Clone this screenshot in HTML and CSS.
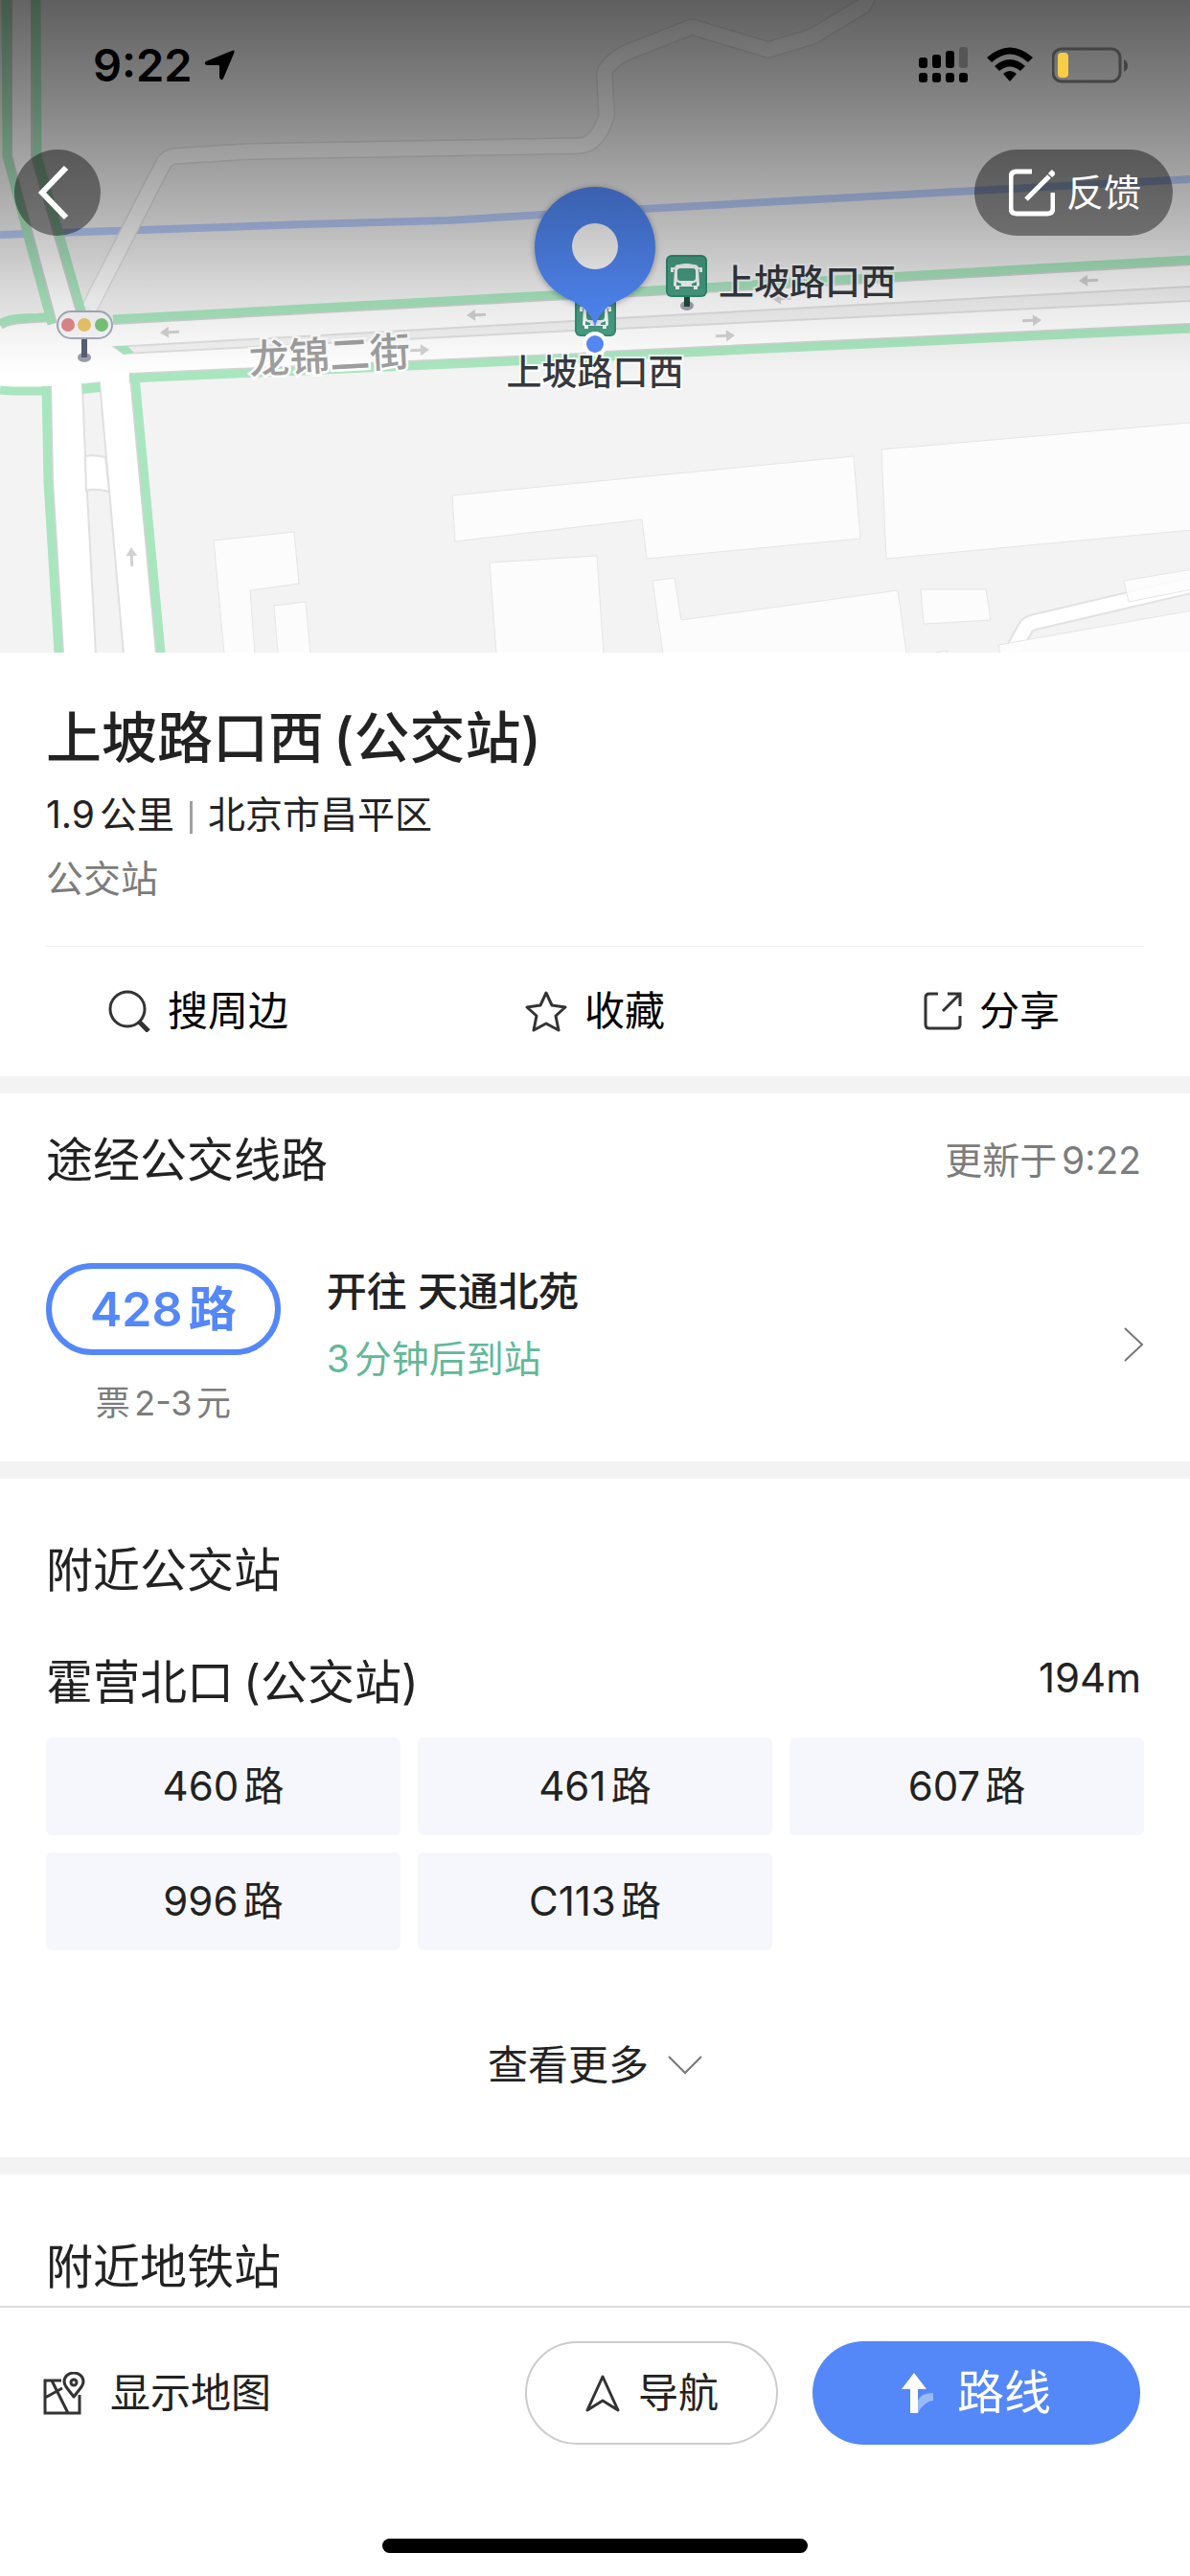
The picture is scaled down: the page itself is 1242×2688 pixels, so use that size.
FILE: index.html
```html
<!DOCTYPE html>
<html lang="zh-CN">
<head>
<meta charset="utf-8">
<meta name="viewport" content="width=device-width, initial-scale=1">
<title>上坡路口西(公交站)</title>
<link rel="stylesheet" href="styles.css">
</head>
<body>
<div class="page">
  <header class="hero">
    <svg class="map" viewBox="0 0 1242 681" preserveAspectRatio="xMidYMid slice" role="img" aria-label="地图">
      <defs>
        <linearGradient id="shade" x1="0" y1="0" x2="0" y2="1">
          <stop offset="0" stop-color="#000" stop-opacity=".61"/>
          <stop offset=".3" stop-color="#000" stop-opacity=".44"/>
          <stop offset=".6" stop-color="#000" stop-opacity=".24"/>
          <stop offset=".8" stop-color="#000" stop-opacity=".09"/>
          <stop offset="1" stop-color="#000" stop-opacity="0"/>
        </linearGradient>
        <linearGradient id="pinFill" x1="0" y1="0" x2="0" y2="1">
          <stop offset="0" stop-color="#3a61ae"/>
          <stop offset="1" stop-color="#4f84f0"/>
        </linearGradient>
        <linearGradient id="pinHole" x1="0" y1="0" x2="0" y2="1">
          <stop offset="0" stop-color="#c4c4c4"/>
          <stop offset="1" stop-color="#dcdcdc"/>
        </linearGradient>
        <filter id="pinShadow" x="-20%" y="-20%" width="140%" height="140%">
          <feDropShadow dx="0" dy="1" stdDeviation="3" flood-color="#000" flood-opacity=".35"/>
        </filter>
        <g id="arrow"><path d="M0 0l9-6v4.500h11v3H9V6z" fill="#d2d2d2"/></g>
        <g id="busStop">
          <rect x="0" y="0" width="43" height="44" rx="6" fill="#2f8f72"/>
          <rect x="2" y="2" width="39" height="40" rx="4" fill="#48a085"/>
          <path d="M9 14Q9 10 14 10Q21 8 29 10Q34 10 34 14L35 32Q34 33 33 33V36H29V33H14V36H10V33Q9 33 8 32z" fill="#fff"/>
          <rect x="12" y="14" width="19" height="13" rx="3" fill="#48a085"/>
          <path d="M11 28l5 2v2h-5zM32 28l-5 2v2h5z" fill="#48a085"/>
          <path d="M5 13h4v2h-1v3h-3zM38 13h-4v2h1v3h3z" fill="#fff"/>
        </g>
      </defs>
      <rect width="1242" height="681" fill="#f3f3f3"/>

      <path d="M0 245L320 234L467 230L566 224L672 218L1017 199L1242 187" fill="none" stroke="#b8ccfb" stroke-width="8"/>

      <g fill="none" stroke-linejoin="round">
        <path d="M93 322L162 187L171 170Q175 164 182 163L261 158L606 152Q624 150 633 121L631 77Q632 68 651 56L722 28L802 52L848 38L901 6L908 -8" stroke="#e2e2e2" stroke-width="18"/>
        <path d="M93 322L162 187L171 170Q175 164 182 163L261 158L606 152Q624 150 633 121L631 77Q632 68 651 56L722 28L802 52L848 38L901 6L908 -8" stroke="#fcfcfc" stroke-width="15"/>
        <path d="M1052 688L1071 654Q1073 651 1080 649L1246 610" stroke="#e2e2e2" stroke-width="18"/>
        <path d="M1052 688L1071 654Q1073 651 1080 649L1246 610" stroke="#fff" stroke-width="14"/>
      </g>

      <g fill="#fdfdfd" fill-opacity=".9" stroke="#e5e5e5" stroke-width="1">
        <path d="M223 564L307 555L312 609L261 616L266 682H234z"/>
        <path d="M286 632L319 628L324 682H290z"/>
        <path d="M472 517L891 476L898 562L675 583L670 542L475 565z"/>
        <path d="M511 587L623 580L630 682H518z"/>
        <path d="M681 606L704 603L711 647L937 616L946 682H692z"/>
        <path d="M961 615H1029L1034 647L964 651z"/>
        <path d="M920 469L1244 441V553L925 583z"/>
        <path d="M1173 606L1244 594V615L1178 628z"/>
        <path d="M1042 673L1244 637V682H1044z"/>
        <path d="M977 681L988 679V682z"/>
      </g>

      <!-- carriageways -->
      <g fill="#fff">
        <path d="M9 0H36V163L86 325L90 345H54L44 290L12 163z"/>
        <path d="M0 340L20 336L120 334L1242 273V342L137 393L168 681H62L50 503L49 410H0z"/>
      </g>
      <g fill="#f3f3f3" stroke="#e0e0e0" stroke-width="2">
        <path d="M119 362L598 335L645 332L1244 299V314L645 343L598 345L129 369z"/>
        <path d="M86 401L104 399L111 477L129 683H100L89 477z"/>
        <path d="M89 476Q98 474 110 477L114 513Q98 509 90 512z" fill="#fff"/>
      </g>
      <g fill="#a9e6bf">
        <path d="M119 361H133L140 368L129 370z"/>
        <path d="M85 401L104 399L105 409L86 411z"/>
      </g>
      <g fill="none" stroke="#d4d4d4" stroke-width="10">
        <path d="M8 0V163L55 338M37 0V163L84 325"/>
        <path d="M118 334L574 309L680 304L1242 272M135 394L606 373L633 371L1242 342"/>
        <path d="M0 339Q8 334 22 333L54 331M49 403L51 503L62 681M140 393L167 681"/>
      </g>
      <g fill="none" stroke="#a9e6bf" stroke-width="9">
        <path d="M6 0L7 163Q20 210 30 250L54 338M38 0L39 163L85 325"/>
        <path d="M118 333L574 308L680 303L1242 271M135 395L606 374L633 372L1242 343"/>
        <path d="M0 338Q8 333 22 332L54 331M0 407Q8 408 20 408H52"/>
        <path d="M48 403L50 503L61 681M141 393L168 681"/>
      </g>
      <use href="#arrow" transform="translate(167 347) rotate(-2)"/>
      <use href="#arrow" transform="translate(487 329) rotate(-2)"/>
      <use href="#arrow" transform="translate(806 312) rotate(-2)"/>
      <use href="#arrow" transform="translate(1126 293) rotate(-2)"/>
      <use href="#arrow" transform="translate(448 365) rotate(178)"/>
      <use href="#arrow" transform="translate(767 350) rotate(178)"/>
      <use href="#arrow" transform="translate(1087 334) rotate(178)"/>
      <use href="#arrow" transform="translate(137 571) rotate(88)"/>

      <text class="street" x="344" y="386" text-anchor="middle" transform="rotate(-3 344 372)">龙锦二街</text>

      <!-- traffic light -->
      <ellipse cx="88" cy="373" rx="7" ry="5" fill="#9a9eae"/>
      <path d="M88 350V373" stroke="#595f75" stroke-width="6"/>
      <rect x="60" y="325" width="57" height="28" rx="14" fill="#fafafc" stroke="#a9adc0" stroke-width="2"/>
      <circle cx="71" cy="339" r="7" fill="#e38a8d"/>
      <circle cx="88" cy="339" r="7" fill="#ecca6b"/>
      <circle cx="106" cy="339" r="7" fill="#7cc97f"/>

      <!-- bus stops -->
      <ellipse cx="717" cy="319" rx="7" ry="5" fill="#a4a5b5"/>
      <path d="M717 308V320" stroke="#1f4a40" stroke-width="6"/>
      <use href="#busStop" transform="translate(695 266)"/>
      <use href="#busStop" transform="translate(600 307)"/>
      <text class="stop" x="750" y="308">上坡路口西</text>

      <rect width="1242" height="390" fill="url(#shade)"/>

      <path d="M621 342C619 330 611 321 599 315C573 304 558 284 558 258A63 63 0 0 1 684 258C684 284 669 304 643 315C631 321 623 330 621 342z" fill="url(#pinFill)" filter="url(#pinShadow)"/>
      <circle cx="621" cy="257" r="24" fill="url(#pinHole)"/>
      <circle cx="621" cy="359" r="13" fill="#fff"/>
      <circle cx="621" cy="359" r="9" fill="#5487f2"/>
      <text class="stop" x="621" y="402" text-anchor="middle">上坡路口西</text>
    </svg>

    <div class="overlay">
      <div class="status">
        <div class="status-left">
          <span class="clock">9:22</span>
          <svg width="32" height="32" viewBox="0 0 32 32" aria-hidden="true"><path d="M29 1Q33-1 31 4L20 30Q18 33 16 29V17Q16 16 15 16H3Q-1 15 2 12z"/></svg>
        </div>
        <div class="status-right">
          <svg width="51" height="38" viewBox="0 0 51 38" aria-hidden="true">
            <rect x="0" y="11" width="9" height="11" rx="3"/><rect x="14" y="8" width="9" height="14" rx="3"/><rect x="28" y="4" width="9" height="18" rx="3"/><rect x="42" y="0" width="9" height="22" rx="3" fill="#555"/>
            <rect x="0" y="27" width="9" height="10" rx="3"/><rect x="14" y="27" width="9" height="10" rx="3"/><rect x="28" y="27" width="9" height="10" rx="3"/><rect x="42" y="27" width="9" height="10" rx="3"/>
          </svg>
          <svg width="48" height="38" viewBox="0 0 48 38" aria-hidden="true">
            <path d="M0 11Q24-10 48 11L43 16Q24-1 5 16z"/><path d="M8 20Q24 6 40 20L35 25Q24 16 13 25z"/><path d="M17 28Q24 22 31 28L24 36z"/>
          </svg>
          <svg width="79" height="38" viewBox="0 0 79 38" aria-hidden="true">
            <rect x="1" y="2" width="70" height="34" rx="9" fill="none" stroke="#444" stroke-width="3"/>
            <rect x="6" y="6" width="11" height="26" rx="4" fill="#f7cd45"/>
            <path d="M75 13Q79 15 79 19.500T75 26z" fill="#444"/>
          </svg>
        </div>
      </div>
      <div class="top-actions">
        <button class="back" type="button" aria-label="返回">
          <svg width="34" height="56" viewBox="0 0 34 56" aria-hidden="true"><path d="M30 2L5 28L30 54" fill="none" stroke="#fff" stroke-width="6"/></svg>
        </button>
        <button class="feedback" type="button">
          <svg width="48" height="50" viewBox="0 0 48 50" aria-hidden="true"><path d="M24 3H8Q2 3 2 9V41Q2 47 8 47H40Q46 47 46 41V25" fill="none" stroke="#fff" stroke-width="5"/><path d="M18 32L42 8" stroke="#fff" stroke-width="5"/><path d="M43 7L47 3" stroke="#fff" stroke-width="6"/></svg>
          反馈
        </button>
      </div>
    </div>
  </header>

  <main>
    <section class="place">
      <h1>上坡路口西<span class="paren">(</span>公交站)</h1>
      <p class="meta">1.9公里<span class="bar"></span>北京市昌平区</p>
      <p class="kind">公交站</p>
      <div class="tools">
        <button type="button">
          <svg width="44" height="44" viewBox="0 0 44 44" aria-hidden="true"><circle cx="20" cy="20" r="18" fill="none" stroke="#333" stroke-width="3"/><path d="M32 33L42 43" stroke="#333" stroke-width="5"/></svg>
          搜周边
        </button>
        <button type="button">
          <svg width="44" height="44" viewBox="0 0 44 44" aria-hidden="true"><path d="M22 3L28 16L42 18L32 27L35 42L22 35L9 42L12 27L2 18L16 16z" fill="none" stroke="#333" stroke-width="3" stroke-linejoin="round"/></svg>
          收藏
        </button>
        <button type="button">
          <svg width="40" height="42" viewBox="0 0 40 42" aria-hidden="true"><path d="M15 3H6Q2 3 2 7V35Q2 39 6 39H34Q38 39 38 35V26M25 3H38V16M38 3L20 21" fill="none" stroke="#333" stroke-width="3"/></svg>
          分享
        </button>
      </div>
    </section>

    <section class="lines">
      <div class="head">
        <h2>途经公交线路</h2>
        <span class="updated">更新于9:22</span>
      </div>
      <a class="line" href="#line-428">
        <span class="line-tag">
          <span class="pill">428路</span>
          <span class="fare">票2-3元</span>
        </span>
        <span class="line-info">
          <span class="toward">开往 天通北苑</span>
          <span class="eta">3分钟后到站</span>
        </span>
        <svg width="22" height="38" viewBox="0 0 22 38" aria-hidden="true"><path d="M2 2L20 19L2 36" fill="none" stroke="#777" stroke-width="2"/></svg>
      </a>
    </section>

    <section class="nearby">
      <h2>附近公交站</h2>
      <div class="station">
        <h3>霍营北口<span class="paren">(</span>公交站)</h3>
        <span class="distance">194m</span>
      </div>
      <div class="routes">
        <button type="button">460路</button>
        <button type="button">461路</button>
        <button type="button">607路</button>
        <button type="button">996路</button>
        <button type="button">C113路</button>
      </div>
      <button class="more" type="button">
        查看更多
        <svg width="36" height="20" viewBox="0 0 36 20" aria-hidden="true"><path d="M1 1L18 18L35 1" fill="none" stroke="#777" stroke-width="2"/></svg>
      </button>
    </section>

    <section class="metro">
      <h2>附近地铁站</h2>
    </section>
  </main>

  <footer class="dock">
    <div class="dock-row">
      <button class="show-map" type="button">
        <svg width="44" height="45" viewBox="0 0 44 45" aria-hidden="true"><g fill="none" stroke="#333" stroke-width="3"><path d="M19 9H2V43H38V24M9 9L26 43M2 27L20 17"/><path d="M32 26L25 17Q22 13 22 10A10 9 0 0 1 42 10Q42 13 39 17z" stroke-linejoin="round"/><circle cx="32" cy="11" r="3"/></g></svg>
        显示地图
      </button>
      <button class="navigate" type="button">
        <svg width="38" height="42" viewBox="0 0 38 42" aria-hidden="true"><path d="M19 4L35 39L19 29L3 39z" fill="none" stroke="#333" stroke-width="3" stroke-linejoin="round"/></svg>
        导航
      </button>
      <button class="directions" type="button">
        <svg width="34" height="44" viewBox="0 0 34 44" aria-hidden="true"><path d="M17 43V30Q20 22 33 22V30Q24 31 18 41z" fill="#9ab8fa"/><path d="M13 1L26 18H17V43H9V18H0z" fill="#fff"/></svg>
        路线
      </button>
    </div>
    <div class="home-bar"></div>
  </footer>
</div>
</body>
</html>
```
FILE: styles.css
```css
* {
  box-sizing: border-box;
}

body {
  margin: 0;
  background: #fff;
  color: #222;
  font-family: Inter, "Noto Sans CJK SC", sans-serif;
  font-size: 42px;
  line-height: 54px;
  text-autospace: normal;
}

h1, h2, h3, p {
  margin: 0;
  font-weight: 400;
}

button {
  display: flex;
  align-items: center;
  justify-content: center;
  margin: 0;
  padding: 0;
  border: 0;
  background: none;
  color: inherit;
  font: inherit;
  text-autospace: inherit;
}

svg {
  display: block;
  flex: none;
}

.page {
  display: flex;
  flex-direction: column;
  min-height: 100vh;
}

main {
  flex: 1;
}

/* map header */
.hero {
  position: relative;
}

.map {
  width: 100%;
  height: 681px;
}

.street {
  font-size: 42px;
  font-weight: 500;
  fill: #9f9f9f;
  stroke: #fff;
  stroke-width: 5px;
  paint-order: stroke;
}

.stop {
  font-size: 37px;
  font-weight: 500;
  fill: #36393f;
  stroke: #fff;
  stroke-opacity: .8;
  stroke-width: 4px;
  paint-order: stroke;
}

.overlay {
  position: absolute;
  inset: 0 0 auto;
}

.status {
  display: flex;
  justify-content: space-between;
  padding: 41px 65px 0 97px;
  color: #000;
}

.status-left,
.status-right {
  display: flex;
  align-items: center;
}

.status-left {
  gap: 12px;
}

.status-right {
  gap: 20px;
}

.clock {
  font-size: 47px;
  font-weight: 600;
}

.top-actions {
  display: flex;
  justify-content: space-between;
  padding: 61px 18px 0 15px;
}

.back,
.feedback {
  height: 90px;
  border-radius: 45px;
  background: rgba(0, 0, 0, .42);
  color: #fff;
  font-size: 39px;
}

.back {
  width: 90px;
  padding-right: 8px;
}

.feedback {
  gap: 12px;
  padding: 0 33px 0 36px;
}

/* place summary */
.place {
  padding-top: 53px;
}

h1 {
  padding: 0 48px;
  font-size: 58px;
  font-weight: 500;
  line-height: 72px;
}

.paren {
  margin-left: 10px;
}

.meta,
.kind {
  display: flex;
  align-items: center;
  padding: 0 48px;
  font-size: 39px;
}

.meta {
  margin-top: 17px;
}

.kind {
  margin-top: 13px;
  color: #7c7c7c;
}

.bar {
  width: 3px;
  height: 34px;
  margin: 6px 16px 0;
  background: #a0a0a0;
}

.tools {
  display: grid;
  grid-template-columns: repeat(3, 1fr);
  position: relative;
  margin-top: 43px;
  color: #000;
}

.tools::before {
  content: "";
  position: absolute;
  inset: 0 48px auto;
  height: 1px;
  background: #f0f0f0;
}

.tools button {
  gap: 18px;
  height: 136px;
}

.lines,
.nearby,
.metro {
  padding-right: 48px;
  padding-left: 48px;
  border-top: 18px solid #f3f3f3;
}

h2,
h3 {
  font-size: 49px;
  line-height: 72px;
}

/* passing lines */
.lines {
  padding-top: 34px;
  padding-bottom: 37px;
}

.head {
  display: flex;
  align-items: center;
  justify-content: space-between;
}

.updated {
  padding-right: 3px;
  color: #7c7c7c;
  font-size: 39px;
}

.line {
  display: flex;
  align-items: center;
  gap: 48px;
  margin-top: 71px;
  color: inherit;
  text-decoration: none;
}

.line-tag,
.line-info {
  display: flex;
  flex-direction: column;
}

.line-tag {
  gap: 26px;
  text-align: center;
}

.pill {
  padding: 0 40px;
  border: 6px solid #5487f8;
  border-radius: 48px;
  color: #5487f8;
  font-size: 50px;
  font-weight: 600;
  line-height: 84px;
}

.fare {
  color: #7c7c7c;
  font-size: 36px;
  line-height: 48px;
}

.line-info {
  flex: 1;
  align-self: flex-start;
  gap: 16px;
  padding-top: 3px;
}

.toward {
  font-weight: 500;
}

.eta {
  color: #62b899;
  font-size: 39px;
}

/* nearby stops */
.nearby {
  padding-top: 60px;
  padding-bottom: 60px;
}

.station {
  display: flex;
  justify-content: space-between;
  margin-top: 45px;
}

.distance {
  padding-right: 3px;
  line-height: 62px;
}

.routes {
  display: grid;
  grid-template-columns: repeat(3, 1fr);
  gap: 18px;
  margin-top: 21px;
}

.routes button {
  height: 102px;
  border-radius: 6px;
  background: #f6f7fd;
}

.more {
  gap: 20px;
  width: 100%;
  height: 72px;
  margin-top: 84px;
}

.metro {
  padding-top: 61px;
  padding-bottom: 4px;
}

/* bottom actions */
.dock {
  position: sticky;
  bottom: 0;
  padding-bottom: 24px;
  border-top: 2px solid #ddd;
  background: #fff;
}

.dock-row {
  display: flex;
  gap: 36px;
  padding: 35px 52px 0 45px;
}

.show-map {
  gap: 26px;
  margin-right: auto;
}

.navigate,
.directions {
  height: 108px;
  border-radius: 54px;
}

.navigate {
  gap: 18px;
  width: 264px;
  border: 2px solid #ccc;
}

.directions {
  gap: 24px;
  width: 342px;
  background: #5487f8;
  color: #fff;
  font-size: 49px;
}

.home-bar {
  width: 444px;
  height: 15px;
  margin: 98px auto 0;
  border-radius: 8px;
  background: #000;
}
```
